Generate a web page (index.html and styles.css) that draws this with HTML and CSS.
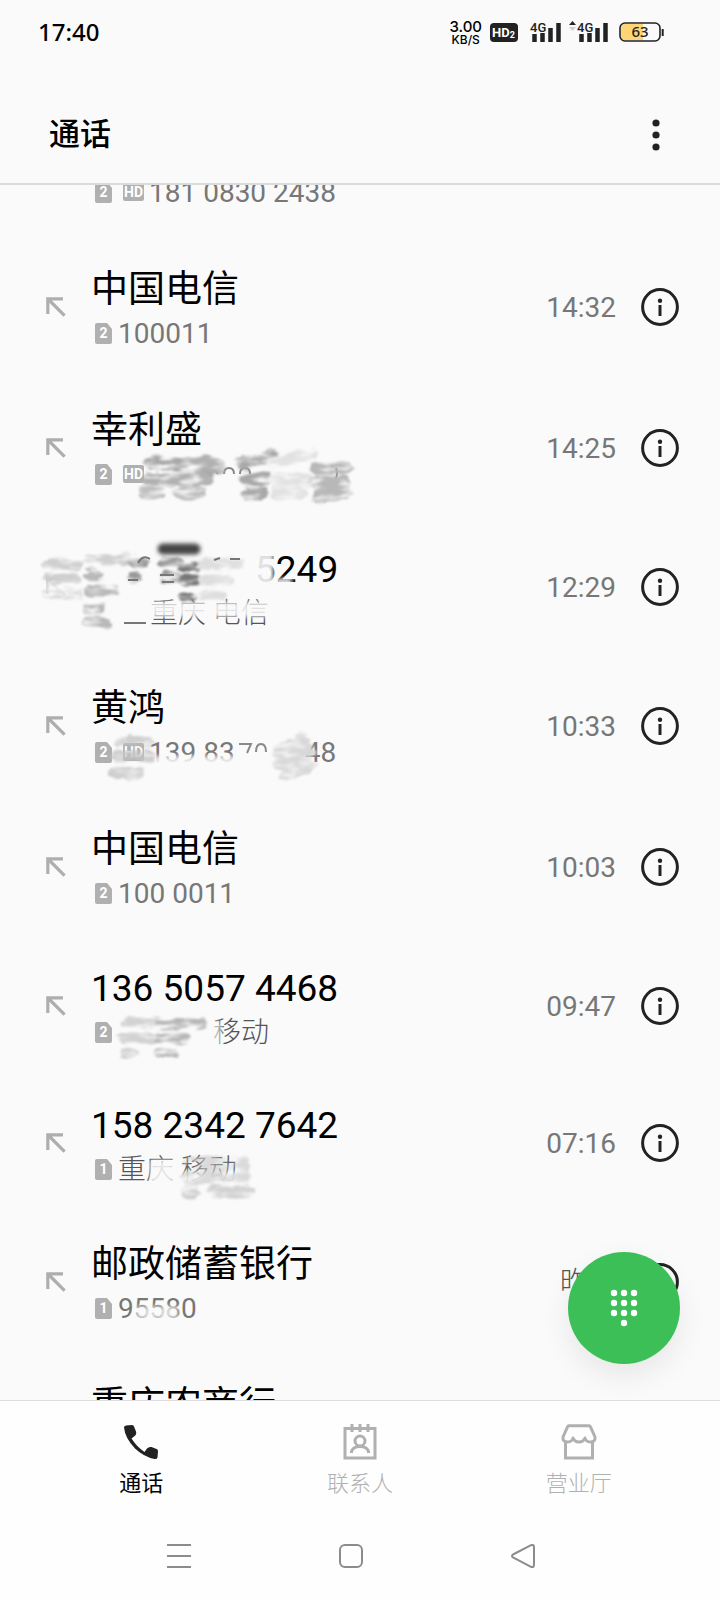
FILE: index.html
```html
<!DOCTYPE html>
<html lang="zh-CN">
<head>
    <meta charset="UTF-8">
    <meta name="viewport" content="width=device-width, initial-scale=1.0">
    <title>通话</title>
    <link rel="stylesheet" href="styles.css">
</head>
<body>
    <!-- shared icons -->
    <svg class="defs" aria-hidden="true">
        <defs>
            <symbol id="arrow" viewBox="0 0 20 20">
                <path d="M1.8 17V1.8H17M2 2l16.6 16.6" fill="none" stroke="#aeaeae" stroke-width="3.2"/>
            </symbol>
            <symbol id="info" viewBox="0 0 38 38">
                <circle cx="19" cy="19" r="17.4" fill="none" stroke="#222" stroke-width="3"/>
                <circle cx="19" cy="12.8" r="2.2" fill="#222"/>
                <path d="M19 17v11" stroke="#222" stroke-width="3"/>
            </symbol>
            <symbol id="sim" viewBox="0 0 17 21">
                <path d="M2 0h10l5 6v13a2 2 0 0 1-2 2H2a2 2 0 0 1-2-2V2a2 2 0 0 1 2-2z" fill="#b0b0b0"/>
            </symbol>
            <filter id="brush" filterUnits="userSpaceOnUse" x="0" y="0" width="400" height="141">
                <feTurbulence type="fractalNoise" baseFrequency="0.05 0.16" numOctaves="3" seed="4" result="n"/>
                <feDisplacementMap in="SourceGraphic" in2="n" scale="9" xChannelSelector="R" yChannelSelector="G" result="d"/>
                <feColorMatrix in="n" type="matrix" values="0 0 0 0 0  0 0 0 0 0  0 0 0 0 0  0 0 0 3 -0.7" result="m"/>
                <feComposite in="d" in2="m" operator="in"/>
                <feGaussianBlur stdDeviation="1.1"/>
            </filter>
            <filter id="soft" filterUnits="userSpaceOnUse" x="0" y="0" width="400" height="141">
                <feGaussianBlur stdDeviation="2"/>
            </filter>
        </defs>
    </svg>

    <div class="status-bar">
        <span class="clock">17:40</span>
        <div class="speed"><b>3.00</b><span>KB/S</span></div>
        <svg class="hd-icon" width="28" height="19" viewBox="0 0 28 19">
            <rect width="28" height="19" rx="4" fill="#222"/>
            <text x="2" y="14" font-size="13" font-weight="700" fill="#fff">HD<tspan font-size="9" dy="1">2</tspan></text>
        </svg>
        <svg class="signal" width="32" height="24" viewBox="0 0 32 24">
            <text x="0" y="12" font-size="13" font-weight="500" fill="#222">4G</text>
            <path d="M4.500 14v8M12.500 13v9M20.500 8v14M28.500 3v19" stroke="#222" stroke-width="4.500"/>
        </svg>
        <svg class="signal-two" width="40" height="24" viewBox="0 0 40 24">
            <path d="M0 5l3.500-4 3.500 4z" fill="#222"/>
            <path d="M0 7l3.500 4 3.500-4z" fill="#d0d0d0"/>
            <text x="8" y="12" font-size="13" font-weight="500" fill="#222">4G</text>
            <path d="M12.500 14v8M20.500 13v9M28.500 8v14M36.500 3v19" stroke="#222" stroke-width="4.500"/>
        </svg>
        <svg class="battery" width="45" height="20" viewBox="0 0 45 20">
            <path d="M6 2h18v16H6a4 4 0 0 1-4-4V6a4 4 0 0 1 4-4z" fill="#fdd576"/>
            <rect x="1" y="1" width="40" height="18" rx="5" fill="none" stroke="#222" stroke-width="1.600"/>
            <path d="M43.700 7v7" stroke="#222" stroke-width="2"/>
            <text class="level" x="21" y="15" text-anchor="middle" fill="#222">63</text>
        </svg>
    </div>

    <header class="header">
        <h1>通话</h1>
        <button class="menu-button" aria-label="更多">
            <svg width="8" height="32" viewBox="0 0 8 32" fill="#222">
                <circle cx="4" cy="4" r="3.600"/><circle cx="4" cy="16" r="3.600"/><circle cx="4" cy="28" r="3.600"/>
            </svg>
        </button>
    </header>

    <main class="content">
        <ul class="call-list">
            <li class="call partial">
                <div class="main">
                    <div class="sub"><span class="sim"><svg><use href="#sim"/></svg>2</span><span class="hd">HD</span>181 0830 2438</div>
                </div>
            </li>
            <li class="call">
                <svg class="arrow"><use href="#arrow"/></svg>
                <div class="main">
                    <div class="name">中国电信</div>
                    <div class="sub"><span class="sim"><svg><use href="#sim"/></svg>2</span>100011</div>
                </div>
                <time>14:32</time>
                <button class="info" aria-label="详情"><svg><use href="#info"/></svg></button>
            </li>
            <li class="call">
                <svg class="arrow"><use href="#arrow"/></svg>
                <div class="main">
                    <div class="name">幸利盛</div>
                    <div class="sub"><span class="sim"><svg><use href="#sim"/></svg>2</span><span class="hd">HD</span></div>
                </div>
                <time>14:25</time>
                <button class="info" aria-label="详情"><svg><use href="#info"/></svg></button>
                <svg class="smudge" viewBox="0 0 400 141">
                    <g fill="none" stroke="#888" stroke-width="2">
                        <path d="M208 97q5-7 10 0M224 97q0-6 5-6t5 6M240 97q0-6 5-6t5 6M336 91q3 8-3 15"/>
                    </g>
                    <g fill="none" stroke-width="13" stroke-linecap="round" filter="url(#brush)">
                        <path d="M150 86h20l40 8" stroke="#a8a8a8"/>
                        <path d="M186 86h20l14 5M148 102h58" stroke="#b0b0b0"/>
                        <path d="M144 116h16M180 116h20" stroke="#bdbdbd"/>
                        <path d="M242 86l32-6M246 102h20M248 117h14" stroke="#a8a8a8"/>
                        <path d="M272 87l40-12M274 102h32M278 116h22" stroke="#e2e2e2"/>
                        <path d="M316 91h30M316 105h30M318 119l28-3" stroke="#b8b8b8"/>
                    </g>
                </svg>
            </li>
            <li class="call number">
                <svg class="arrow"><use href="#arrow"/></svg>
                <div class="main">
                    <div class="name"><span class="masked"></span>5249</div>
                    <div class="sub text"><span class="masked"></span>重庆 电信</div>
                </div>
                <time>12:29</time>
                <button class="info" aria-label="详情"><svg><use href="#info"/></svg></button>
                <svg class="smudge" viewBox="0 0 400 137">
                    <path d="M46 62h20v20H46zM144 84h130v15H144z" fill="#fafafa" fill-opacity=".85" filter="url(#soft)"/>
                    <path d="M252 34h22v36h-22zM276 60h16v8h-16z" fill="#fafafa" fill-opacity=".9" filter="url(#soft)"/>
                    <g fill="none" stroke-width="11" stroke-linecap="round" filter="url(#brush)">
                        <path d="M48 47h30M48 61h28" stroke="#cfcfcf"/>
                        <path d="M48 76h30" stroke="#ddd"/>
                        <path d="M90 42h36" stroke="#d0d0d0"/>
                        <path d="M90 57h8M90 72h24M88 90h12M88 104h18" stroke="#b8b8b8"/>
                        <path d="M134 44h10M132 60h4" stroke="#999"/>
                        <path d="M164 44h14M166 59h10" stroke="#999"/>
                        <path d="M184 48h14M184 62h12M184 79h8" stroke="#777"/>
                        <path d="M202 46h36M204 62h24M204 78h18" stroke="#dedede"/>
                    </g>
                    <g fill="none" stroke="#777" stroke-width="2">
                        <path d="M138 45q5-9 12-4M128 62h10M160 57h14M162 64h12M214 42l6-2M230 41h10M124 105h22"/>
                    </g>
                    <path d="M163 31h32" fill="none" stroke="#444" stroke-width="11" stroke-linecap="round" filter="url(#soft)"/>
                </svg>
            </li>
            <li class="call">
                <svg class="arrow"><use href="#arrow"/></svg>
                <div class="main">
                    <div class="name">黄鸿</div>
                    <div class="sub"><span class="sim"><svg><use href="#sim"/></svg>2</span><span class="hd">HD</span>139 83<span class="masked tail"></span>48</div>
                </div>
                <time>10:33</time>
                <button class="info" aria-label="详情"><svg><use href="#info"/></svg></button>
                <svg class="smudge" viewBox="0 0 400 141">
                    <path d="M150 101h118v12H150z" fill="#fafafa" fill-opacity=".85" filter="url(#soft)"/>
                    <g fill="none" stroke="#8a8a8a" stroke-width="2">
                        <path d="M239 89h12l-4 9M256 97q0-8 5-8t5 8"/>
                    </g>
                    <g fill="none" stroke-width="12" stroke-linecap="round" stroke-opacity=".8" filter="url(#brush)">
                        <path d="M120 87h28M118 101h32" stroke="#c4c4c4"/>
                        <path d="M116 118h22" stroke="#c4c4c4"/>
                    </g>
                    <g fill="none" stroke="#d8d8d8" stroke-width="13" stroke-linecap="round" filter="url(#brush)">
                        <path d="M278 97l24-12M280 109l28-12M286 121l24-12"/>
                    </g>
                </svg>
            </li>
            <li class="call">
                <svg class="arrow"><use href="#arrow"/></svg>
                <div class="main">
                    <div class="name">中国电信</div>
                    <div class="sub"><span class="sim"><svg><use href="#sim"/></svg>2</span>100 0011</div>
                </div>
                <time>10:03</time>
                <button class="info" aria-label="详情"><svg><use href="#info"/></svg></button>
            </li>
            <li class="call number">
                <svg class="arrow"><use href="#arrow"/></svg>
                <div class="main">
                    <div class="name">136 5057 4468</div>
                    <div class="sub text"><span class="sim"><svg><use href="#sim"/></svg>2</span><span class="masked city"></span>移动</div>
                </div>
                <time>09:47</time>
                <button class="info" aria-label="详情"><svg><use href="#info"/></svg></button>
                <svg class="smudge" viewBox="0 0 400 137">
                    <path d="M210 84h12v28h-12z" fill="#fafafa" fill-opacity=".6" filter="url(#soft)"/>
                    <g fill="none" stroke-width="11" stroke-linecap="round" filter="url(#brush)">
                        <path d="M126 86h34M124 101h28M126 116h6" stroke="#d2d2d2"/>
                        <path d="M160 87h40M160 101h24M160 116h14" stroke="#b8b8b8"/>
                    </g>
                </svg>
            </li>
            <li class="call number">
                <svg class="arrow"><use href="#arrow"/></svg>
                <div class="main">
                    <div class="name">158 2342 7642</div>
                    <div class="sub text"><span class="sim"><svg><use href="#sim"/></svg>1</span>重庆 移动</div>
                </div>
                <time>07:16</time>
                <button class="info" aria-label="详情"><svg><use href="#info"/></svg></button>
                <svg class="smudge" viewBox="0 0 400 137">
                    <path d="M150 86h24v30h-24zM180 98h62v18h-62z" fill="#fafafa" fill-opacity=".85" filter="url(#soft)"/>
                    <g fill="none" stroke-width="13" stroke-linecap="round" stroke-opacity=".7" filter="url(#brush)">
                        <path d="M190 90h54M188 104h56" stroke="#ccc"/>
                        <path d="M188 118h6M214 118h34" stroke="#c0c0c0"/>
                    </g>
                </svg>
            </li>
            <li class="call">
                <svg class="arrow"><use href="#arrow"/></svg>
                <div class="main">
                    <div class="name">邮政储蓄银行</div>
                    <div class="sub"><span class="sim"><svg><use href="#sim"/></svg>1</span>95580</div>
                </div>
                <time class="day">昨天</time>
                <button class="info" aria-label="详情"><svg><use href="#info"/></svg></button>
                <svg class="smudge" viewBox="0 0 400 141">
                    <path d="M136 95h42v13h-42z" fill="#fafafa" fill-opacity=".75" filter="url(#soft)"/>
                </svg>
            </li>
            <li class="call">
                <div class="main">
                    <div class="name">重庆农商行</div>
                    <div class="sub"></div>
                </div>
            </li>
        </ul>
        <button class="dial-button" aria-label="拨号盘">
            <svg width="28" height="38" viewBox="0 0 28 38" fill="#fff">
                <circle cx="4" cy="4" r="3.200"/><circle cx="14" cy="4" r="3.200"/><circle cx="24" cy="4" r="3.200"/>
                <circle cx="4" cy="14" r="3.200"/><circle cx="14" cy="14" r="3.200"/><circle cx="24" cy="14" r="3.200"/>
                <circle cx="4" cy="24" r="3.200"/><circle cx="14" cy="24" r="3.200"/><circle cx="24" cy="24" r="3.200"/>
                <circle cx="14" cy="34" r="3.200"/>
            </svg>
        </button>
    </main>

    <nav class="tabs">
        <a href="#calls" class="tab active">
            <svg width="36" height="36" viewBox="0 0 36 36">
                <path d="M1 3.500Q1 2 3 1.500L9 1q1.500 0 2 1.500l2 5q1 3-2 5L8.500 14.500Q14 23 21.500 28L24 24.500q1.500-2 4.500-1.500l5 2q1.500.5 1.500 2l-.5 6.500q-.5 1.800-3 1.500Q21 33 12 24.500 2 14 1 3.500z" fill="#222"/>
            </svg>
            <span>通话</span>
        </a>
        <a href="#contacts" class="tab">
            <svg width="36" height="36" viewBox="0 0 36 36" fill="none" stroke="#b0b0b0" stroke-width="3">
                <path d="M3 4.500h30V34H3zM10 0v8M18 0v8M26 0v8"/>
                <circle cx="18" cy="17" r="5"/>
                <path d="M9.500 29v-1.500q1.500-5 8.500-5t8.500 5V29"/>
            </svg>
            <span>联系人</span>
        </a>
        <a href="#hall" class="tab">
            <svg width="36" height="36" viewBox="0 0 36 36" fill="none" stroke="#b0b0b0" stroke-width="3" stroke-linejoin="round">
                <path d="M8 1.800h20q1 0 1.500 1L34 13q.5 5-4.500 5-4.500 0-5.500-4-1.500 4-6 4t-6-4q-1 4-5.500 4-5 0-4.500-5L6.500 2.800q.5-1 1.500-1z"/>
                <path d="M4.500 18v16h27V18" stroke-linejoin="miter"/>
            </svg>
            <span>营业厅</span>
        </a>
    </nav>

    <div class="system-nav">
        <button aria-label="最近任务">
            <svg width="24" height="24" viewBox="0 0 24 24"><path d="M0 1h24M0 12h24M0 23h24"/></svg>
        </button>
        <button aria-label="主屏幕">
            <svg width="24" height="24" viewBox="0 0 24 24"><rect x="1" y="1" width="22" height="22" rx="5"/></svg>
        </button>
        <button aria-label="返回">
            <svg width="24" height="24" viewBox="0 0 24 24"><path d="M2 10.500L20 1.200q3-1 3 2v17.600q0 3-3 2L2 13.500q-2-1.500 0-3z"/></svg>
        </button>
    </div>
</body>
</html>
```
FILE: styles.css
```css
* {
    box-sizing: border-box;
}

body {
    margin: 0;
    min-height: 100vh;
    height: 100vh;
    display: flex;
    flex-direction: column;
    background-color: #fafafa;
    color: #000;
    font-family: Roboto, "Noto Sans CJK SC", sans-serif;
}

button {
    padding: 0;
    border: none;
    background: none;
    cursor: pointer;
}

svg {
    display: block;
    flex-shrink: 0;
}

.defs {
    position: absolute;
    width: 0;
    height: 0;
}

/* status bar */
.status-bar {
    height: 64px;
    flex-shrink: 0;
    display: flex;
    align-items: center;
    padding: 0 56px 0 38px;
}

.clock {
    flex: 1;
    font-family: "Noto Sans", sans-serif;
    font-size: 24px;
    line-height: 30px;
    font-weight: 500;
}

.speed {
    display: flex;
    flex-direction: column;
    align-items: center;
    font-family: Inter, sans-serif;
    font-size: 12px;
    line-height: 12px;
    font-weight: 500;
}

.speed b {
    font-size: 15px;
    line-height: 15px;
    font-weight: 500;
}

.hd-icon {
    margin-left: 8px;
}

.signal {
    margin-left: 12px;
}

.signal-two {
    margin-left: 7px;
}

.battery {
    margin-left: 10px;
}

.level {
    font-family: "Noto Sans", sans-serif;
    font-size: 15px;
    font-weight: 500;
}

/* header */
.header {
    flex-shrink: 0;
    display: flex;
    justify-content: space-between;
    align-items: center;
    padding: 48px 60px 26px 49px;
    border-bottom: 2px solid #dadcdb;
}

.header h1 {
    margin: 0;
    font-size: 31px;
    line-height: 45px;
    font-weight: 500;
}

/* call list */
.content {
    position: relative;
    flex: 1;
    min-height: 0;
    overflow: hidden;
}

.call-list {
    list-style: none;
    margin: 0;
    padding: 0;
}

.call {
    position: relative;
    display: flex;
    align-items: center;
    padding: 25px 41px 25px 46px;
}

.call.number {
    padding-top: 23px;
    padding-bottom: 23px;
}

.call.partial {
    padding-top: 0;
    padding-bottom: 25px;
}

.call.partial .sub {
    margin-top: -12px;
}

.arrow {
    position: relative;
    width: 20px;
    height: 20px;
    margin-right: -20px;
}

.main {
    flex: 1;
    padding-left: 45px;
}

.name {
    display: flex;
    padding-top: 4px;
    font-size: 37px;
    line-height: 49px;
}

.sub {
    display: flex;
    align-items: center;
    height: 38px;
    padding-top: 2px;
    padding-left: 4px;
    font-size: 28px;
    line-height: 36px;
    color: #777;
    white-space: pre;
}

/* carrier and city names are set lighter than the digits */
.sub.text,
.call .day {
    font-weight: 300;
    color: #555;
}

.sim {
    position: relative;
    width: 17px;
    margin: 0 6px 2px 0;
    color: #fff;
    font-size: 14px;
    line-height: 21px;
    font-weight: 700;
    text-align: center;
}

.sim svg {
    position: absolute;
    top: 0;
    left: 0;
    z-index: -1;
    width: 17px;
    height: 21px;
}

.hd {
    width: 21px;
    margin: 0 5px 2px;
    background-color: #b0b0b0;
    border-radius: 2px;
    color: #fff;
    font-size: 14px;
    line-height: 18px;
    font-weight: 700;
    text-align: center;
}

.masked {
    width: 164px;
}

.sub .masked {
    width: 55px;
}

.sub .masked.tail {
    width: 70px;
}

.sub .masked.city {
    width: 95px;
}

.call time {
    padding-top: 2px;
    font-size: 28px;
    line-height: 36px;
    color: #777;
}

.info {
    margin-left: 25px;
}

.info svg {
    width: 38px;
    height: 38px;
}

.smudge {
    position: absolute;
    top: 0;
    left: 0;
    width: 400px;
    height: 100%;
    pointer-events: none;
}

.dial-button {
    position: absolute;
    right: 40px;
    bottom: 36px;
    width: 112px;
    height: 112px;
    display: flex;
    justify-content: center;
    align-items: center;
    border-radius: 50%;
    background-color: #3cbf57;
    box-shadow: 0 12px 30px rgba(0, 0, 0, 0.08);
}

/* bottom tabs */
.tabs {
    flex-shrink: 0;
    display: flex;
    padding: 23px 32px 12px;
    border-top: 1px solid #dedede;
    background-color: #fefefe;
}

.tab {
    flex: 1;
    display: flex;
    flex-direction: column;
    align-items: center;
    gap: 8px;
    color: #b0b0b0;
    font-size: 22px;
    line-height: 32px;
    font-weight: 300;
    text-decoration: none;
}

.tab.active {
    color: #000;
    font-weight: 400;
}

.system-nav {
    flex-shrink: 0;
    display: flex;
    justify-content: space-between;
    align-items: center;
    height: 88px;
    padding: 0 185px 0 167px;
    background-color: #fefefe;
}

.system-nav svg {
    fill: none;
    stroke: #8c8c8c;
    stroke-width: 2;
}
```
